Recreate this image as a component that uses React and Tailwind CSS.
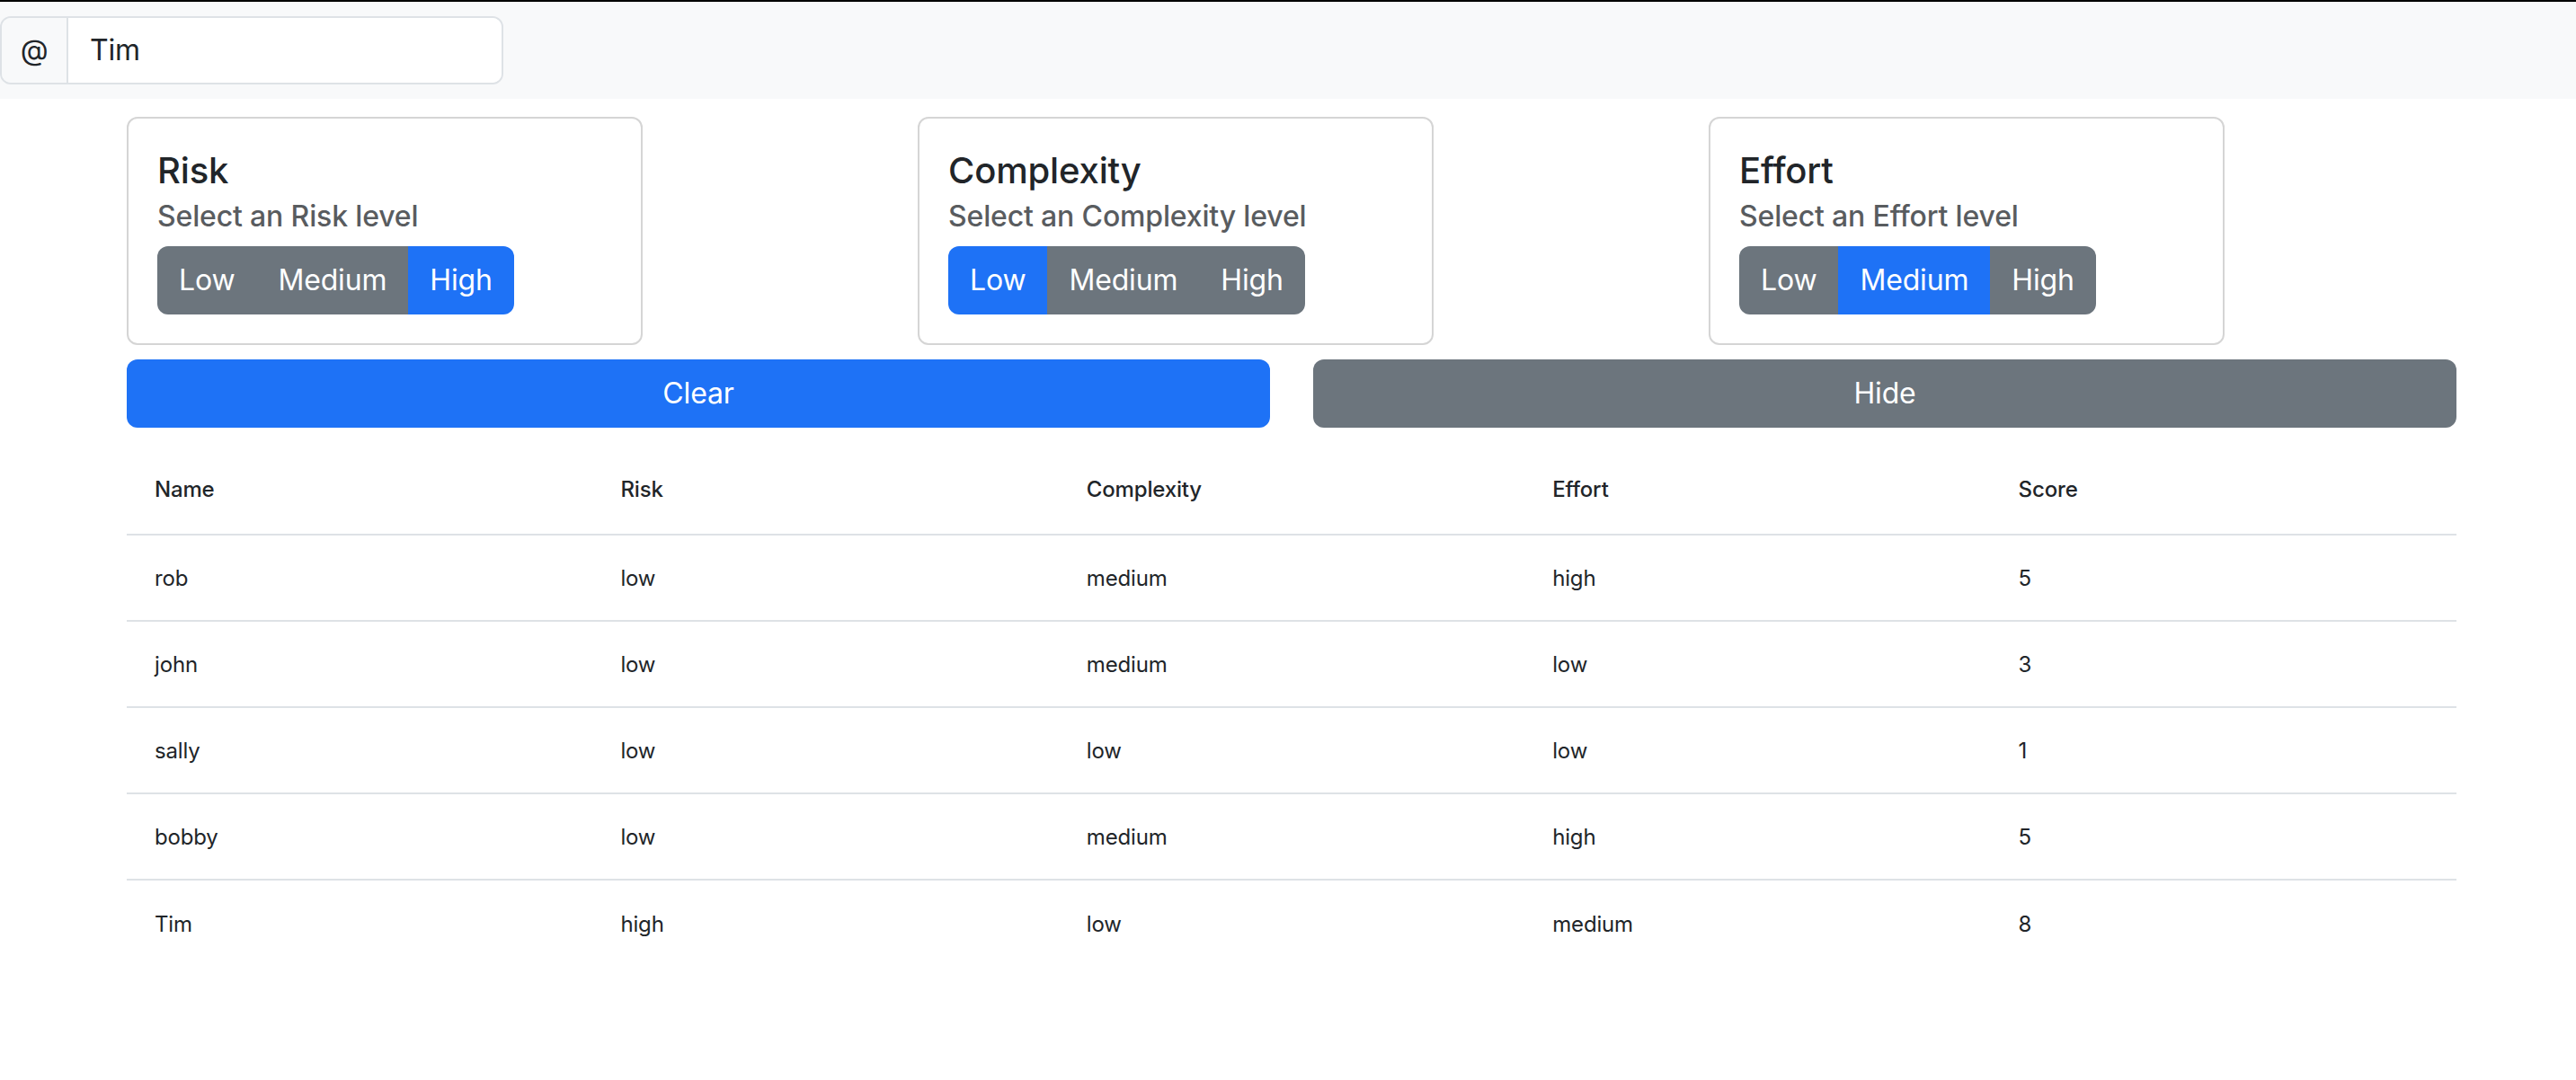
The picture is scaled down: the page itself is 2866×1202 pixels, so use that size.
import React, { useState } from "react";

const BLUE = "bg-[#1e72f6]";
const GRAY = "bg-[#6c757d]";

const rows = [
  { name: "rob", risk: "low", complexity: "medium", effort: "high", score: 5 },
  { name: "john", risk: "low", complexity: "medium", effort: "low", score: 3 },
  { name: "sally", risk: "low", complexity: "low", effort: "low", score: 1 },
  { name: "bobby", risk: "low", complexity: "medium", effort: "high", score: 5 },
  { name: "Tim", risk: "high", complexity: "low", effort: "medium", score: 8 },
];

const LEVELS = ["Low", "Medium", "High"];

function LevelCard({ title, value, onChange }) {
  return (
    <div className="w-[574px] h-[254px] shrink-0 border-2 border-[#d5d5d5] rounded-[12px] p-[32px] bg-white">
      <div className="text-[40px] font-medium leading-[1.2] pt-[2px] mb-[16px] text-[#212529]">{title}</div>
      <div className="text-[32px] font-medium leading-[1.2] -mt-[8px] mb-[14px] text-[#595c5f]">
        Select an {title} level
      </div>
      <div className="inline-flex rounded-[12px] overflow-hidden">
        {LEVELS.map((l) => (
          <button
            key={l}
            type="button"
            onClick={() => onChange(l)}
            className={`h-[76px] px-[24px] text-[32px] leading-[1.5] text-white ${value === l ? BLUE : GRAY}`}
          >
            {l}
          </button>
        ))}
      </div>
    </div>
  );
}

export default function App() {
  const [name, setName] = useState("Tim");
  const [risk, setRisk] = useState("High");
  const [complexity, setComplexity] = useState("Low");
  const [effort, setEffort] = useState("Medium");
  const [hidden, setHidden] = useState(false);

  return (
    <div className="min-h-screen bg-white text-[#212529] tracking-[-0.01em] font-['Inter','Noto_Sans',sans-serif]">
      {/* top bar */}
      <div className="border-t-2 border-black bg-[#f8f9fa] h-[110px] pt-[16px]">
        <div className="flex w-[560px] h-[76px] border-2 border-[#dee2e6] rounded-[12px] overflow-hidden">
          <div className="w-[74px] shrink-0 flex items-center justify-center bg-[#f8f9fa] border-r-2 border-[#dee2e6] text-[32px]">
            @
          </div>
          <input
            value={name}
            onChange={(e) => setName(e.target.value)}
            className="flex-1 min-w-0 bg-white pl-[24px] text-[32px] outline-none text-[#212529]"
          />
        </div>
      </div>

      <div className="ml-[141px] w-[2592px]">
        {!hidden && (
          <div className="flex gap-[306px] mt-[20px]">
            <LevelCard title="Risk" value={risk} onChange={setRisk} />
            <LevelCard title="Complexity" value={complexity} onChange={setComplexity} />
            <LevelCard title="Effort" value={effort} onChange={setEffort} />
          </div>
        )}

        <div className="flex gap-[48px] mt-[16px]">
          <button
            type="button"
            onClick={() => {
              setRisk("");
              setComplexity("");
              setEffort("");
            }}
            className={`flex-1 h-[76px] rounded-[12px] text-white text-[32px] ${BLUE}`}
          >
            Clear
          </button>
          <button
            type="button"
            onClick={() => setHidden((h) => !h)}
            className={`flex-1 h-[76px] rounded-[12px] text-white text-[32px] ${GRAY}`}
          >
            Hide
          </button>
        </div>

        {/* table */}
        <div className="mt-[18px] text-[24px] leading-[36px]">
          <div className="grid grid-cols-5 h-[102px] pt-[1px] items-center border-b-2 border-[#dee2e6] font-medium">
            <div className="pl-[31px]">Name</div>
            <div className="pl-[31px]">Risk</div>
            <div className="pl-[31px]">Complexity</div>
            <div className="pl-[31px]">Effort</div>
            <div className="pl-[31px]">Score</div>
          </div>
          {rows.map((r, i) => (
            <div
              key={r.name}
              className={`grid grid-cols-5 h-[96px] pt-[2px] items-center ${
                i < rows.length - 1 ? "border-b-2 border-[#dee2e6]" : ""
              }`}
            >
              <div className="pl-[31px]">{r.name}</div>
              <div className="pl-[31px]">{r.risk}</div>
              <div className="pl-[31px]">{r.complexity}</div>
              <div className="pl-[31px]">{r.effort}</div>
              <div className="pl-[31px]">{r.score}</div>
            </div>
          ))}
        </div>
      </div>
    </div>
  );
}
